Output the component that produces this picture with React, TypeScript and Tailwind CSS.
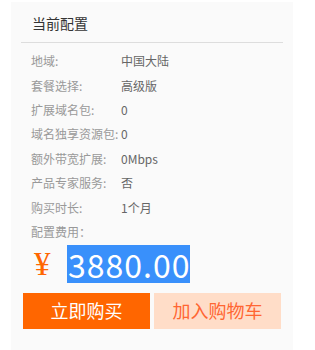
const rows = [
  { label: "地域:", value: "中国大陆" },
  { label: "套餐选择:", value: "高级版" },
  { label: "扩展域名包:", value: "0" },
  { label: "域名独享资源包:", value: "0" },
  { label: "额外带宽扩展:", value: "0Mbps" },
  { label: "产品专家服务:", value: "否" },
  { label: "购买时长:", value: "1个月" },
];

export default function App() {
  return (
    <div
      className="w-[315px] h-[350px] bg-white pt-[2px] pl-[11px]"
      style={{ fontFamily: '"Noto Sans CJK SC", "Noto Sans", sans-serif' }}
    >
      <div className="w-[282px] h-[348px] bg-[#fafafa] px-[10px]">
        {/* header */}
        <div className="h-[41px] border-b border-[#dddddd] pl-[11px] pt-[11px] text-[14px] leading-[20px] text-[#333333]">
          当前配置
        </div>

        {/* config rows */}
        <div className="pt-[6px] pl-[10px]">
          {rows.map((row) => (
            <div key={row.label} className="flex h-[24.4px] items-center text-[12px]">
              <span className="w-[90px] shrink-0 whitespace-nowrap text-[#999999]">
                {row.label}
              </span>
              <span className="text-[#666666]">{row.value}</span>
            </div>
          ))}
          <div className="mt-[2px] text-[12px] leading-[20px] text-[#999999]">
            配置费用：
          </div>
        </div>

        {/* price */}
        <div className="mt-[3px] flex items-center pl-[13px]">
          <span
            className="w-[33px] text-[33px] font-light leading-[38px] text-[#ff6600]"
            style={{ fontFamily: '"Liberation Serif", "Noto Sans CJK SC", serif' }}
          >
            ¥
          </span>
          <span className="h-[38px] bg-[#3990fb] pl-[1px] text-[32px] leading-[38px] tracking-[1px] text-white">
            3880.00
          </span>
        </div>

        {/* actions */}
        <div className="mt-[10px] flex gap-[4px] pl-[2px]">
          <button className="h-[36px] w-[127px] bg-[#ff6600] text-[18px] text-white">
            立即购买
          </button>
          <button className="h-[36px] w-[127px] bg-[#ffddc8] text-[18px] text-[#ff6633]">
            加入购物车
          </button>
        </div>
      </div>
    </div>
  );
}
